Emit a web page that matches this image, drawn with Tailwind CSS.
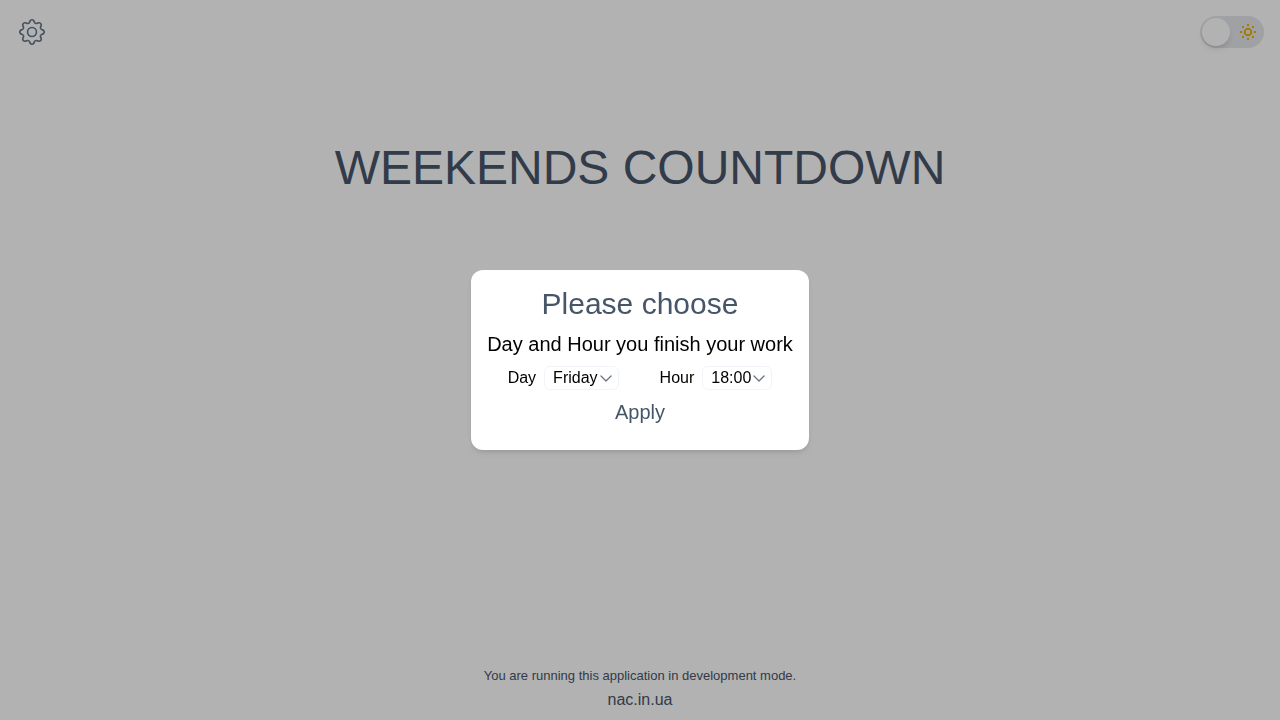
<!DOCTYPE html>
<html lang="en">
<head>
<meta charset="utf-8">
<meta name="viewport" content="width=device-width, initial-scale=1">
<title>Weekends Countdown</title>
<script src="https://cdn.jsdelivr.net/npm/@tailwindcss/browser@4"></script>
</head>
<body class="bg-white font-['Liberation_Sans',Arial,sans-serif] text-[#475569]">
<div class="flex min-h-screen flex-col">
  <header class="flex items-center justify-between p-4">
    <button type="button" aria-label="Settings" class="flex size-8 items-center justify-center text-[#64748b]">
      <svg class="size-[26px]" viewBox="0 0 16 16" fill="currentColor" aria-hidden="true">
        <path d="M8 4.754a3.246 3.246 0 1 0 0 6.492 3.246 3.246 0 0 0 0-6.492zM5.754 8a2.246 2.246 0 1 1 4.492 0 2.246 2.246 0 0 1-4.492 0z"/>
        <path d="M9.796 1.343c-.527-1.79-3.065-1.79-3.592 0l-.094.319a.873.873 0 0 1-1.255.52l-.292-.16c-1.64-.892-3.433.902-2.54 2.541l.159.292a.873.873 0 0 1-.52 1.255l-.319.094c-1.79.527-1.79 3.065 0 3.592l.319.094a.873.873 0 0 1 .52 1.255l-.16.292c-.892 1.64.901 3.434 2.541 2.54l.292-.159a.873.873 0 0 1 1.255.52l.094.319c.527 1.79 3.065 1.79 3.592 0l.094-.319a.873.873 0 0 1 1.255-.52l.292.16c1.64.893 3.434-.902 2.54-2.541l-.159-.292a.873.873 0 0 1 .52-1.255l.319-.094c1.79-.527 1.79-3.065 0-3.592l-.319-.094a.873.873 0 0 1-.52-1.255l.16-.292c.893-1.64-.902-3.433-2.541-2.54l-.292.159a.873.873 0 0 1-1.255-.52l-.094-.319zm-2.633.283c.246-.835 1.428-.835 1.674 0l.094.319a1.873 1.873 0 0 0 2.693 1.115l.291-.16c.764-.415 1.6.42 1.184 1.185l-.159.292a1.873 1.873 0 0 0 1.116 2.692l.318.094c.835.246.835 1.428 0 1.674l-.319.094a1.873 1.873 0 0 0-1.115 2.693l.16.291c.415.764-.42 1.6-1.185 1.184l-.291-.159a1.873 1.873 0 0 0-2.693 1.116l-.094.318c-.246.835-1.428.835-1.674 0l-.094-.319a1.873 1.873 0 0 0-2.692-1.115l-.292.16c-.764.415-1.6-.42-1.184-1.185l.159-.291A1.873 1.873 0 0 0 1.945 8.93l-.319-.094c-.835-.246-.835-1.428 0-1.674l.319-.094A1.873 1.873 0 0 0 3.06 4.377l-.16-.292c-.415-.764.42-1.6 1.185-1.184l.292.159a1.873 1.873 0 0 0 2.692-1.115l.094-.319z"/>
      </svg>
    </button>
    <button type="button" role="switch" aria-checked="false" aria-label="Dark theme" class="flex h-8 w-16 items-center justify-between rounded-full bg-[#e5e7eb] p-0.5">
      <span class="size-7 rounded-full bg-white shadow-md"></span>
      <svg class="mr-1 size-5" viewBox="0 0 20 20" fill="none" stroke="#eab308" stroke-width="2" aria-hidden="true">
        <circle cx="10" cy="10" r="3.3"/>
        <path d="M9 3h2M9 17h2M2 10h2M16 10h2M4 5h2M14 5h2M4 15h2M14 15h2"/>
      </svg>
    </button>
  </header>
  <main class="flex grow flex-col items-center pt-20">
    <h1 class="text-center text-5xl leading-none uppercase">Weekends Countdown</h1>
  </main>
  <footer class="flex flex-col items-center gap-0.5 pb-2 text-center">
    <p class="text-[13px] leading-5">You are running this application in development mode.</p>
    <a href="#" class="leading-6">nac.in.ua</a>
  </footer>
</div>
<div class="fixed inset-0 flex items-center justify-center bg-black/30">
  <form role="dialog" aria-modal="true" aria-labelledby="choose" class="flex flex-col gap-2 rounded-xl bg-white p-4 pb-6 text-center shadow-md">
    <h2 id="choose" class="text-3xl leading-9">Please choose</h2>
    <p class="text-xl leading-7 text-black">Day and Hour you finish your work</p>
    <div class="flex justify-around text-black">
      <div class="flex items-center gap-2">
        <label for="day" class="leading-6">Day</label>
        <div class="grid items-center">
          <select id="day" class="col-start-1 row-start-1 h-6 field-sizing-content appearance-none rounded-md border border-slate-100 bg-white pr-5 pl-2 leading-5">
            <option>Monday</option><option>Tuesday</option><option>Wednesday</option><option>Thursday</option><option selected>Friday</option><option>Saturday</option><option>Sunday</option>
          </select>
          <svg class="pointer-events-none col-start-1 row-start-1 mr-[7px] size-3 justify-self-end" viewBox="0 0 12 12" fill="none" stroke="#6b7280" stroke-width="1.3" stroke-linecap="round" stroke-linejoin="round" aria-hidden="true"><path d="M1 4l5 5 5-5"/></svg>
        </div>
      </div>
      <div class="flex items-center gap-2">
        <label for="hour" class="leading-6">Hour</label>
        <div class="grid items-center">
          <select id="hour" class="col-start-1 row-start-1 h-6 field-sizing-content appearance-none rounded-md border border-slate-100 bg-white pr-5 pl-2 leading-5">
            <option>16:00</option><option>17:00</option><option selected>18:00</option><option>19:00</option><option>20:00</option>
          </select>
          <svg class="pointer-events-none col-start-1 row-start-1 mr-[7px] size-3 justify-self-end" viewBox="0 0 12 12" fill="none" stroke="#6b7280" stroke-width="1.3" stroke-linecap="round" stroke-linejoin="round" aria-hidden="true"><path d="M1 4l5 5 5-5"/></svg>
        </div>
      </div>
    </div>
    <button type="button" class="self-center text-xl leading-7">Apply</button>
  </form>
</div>
</body>
</html>
